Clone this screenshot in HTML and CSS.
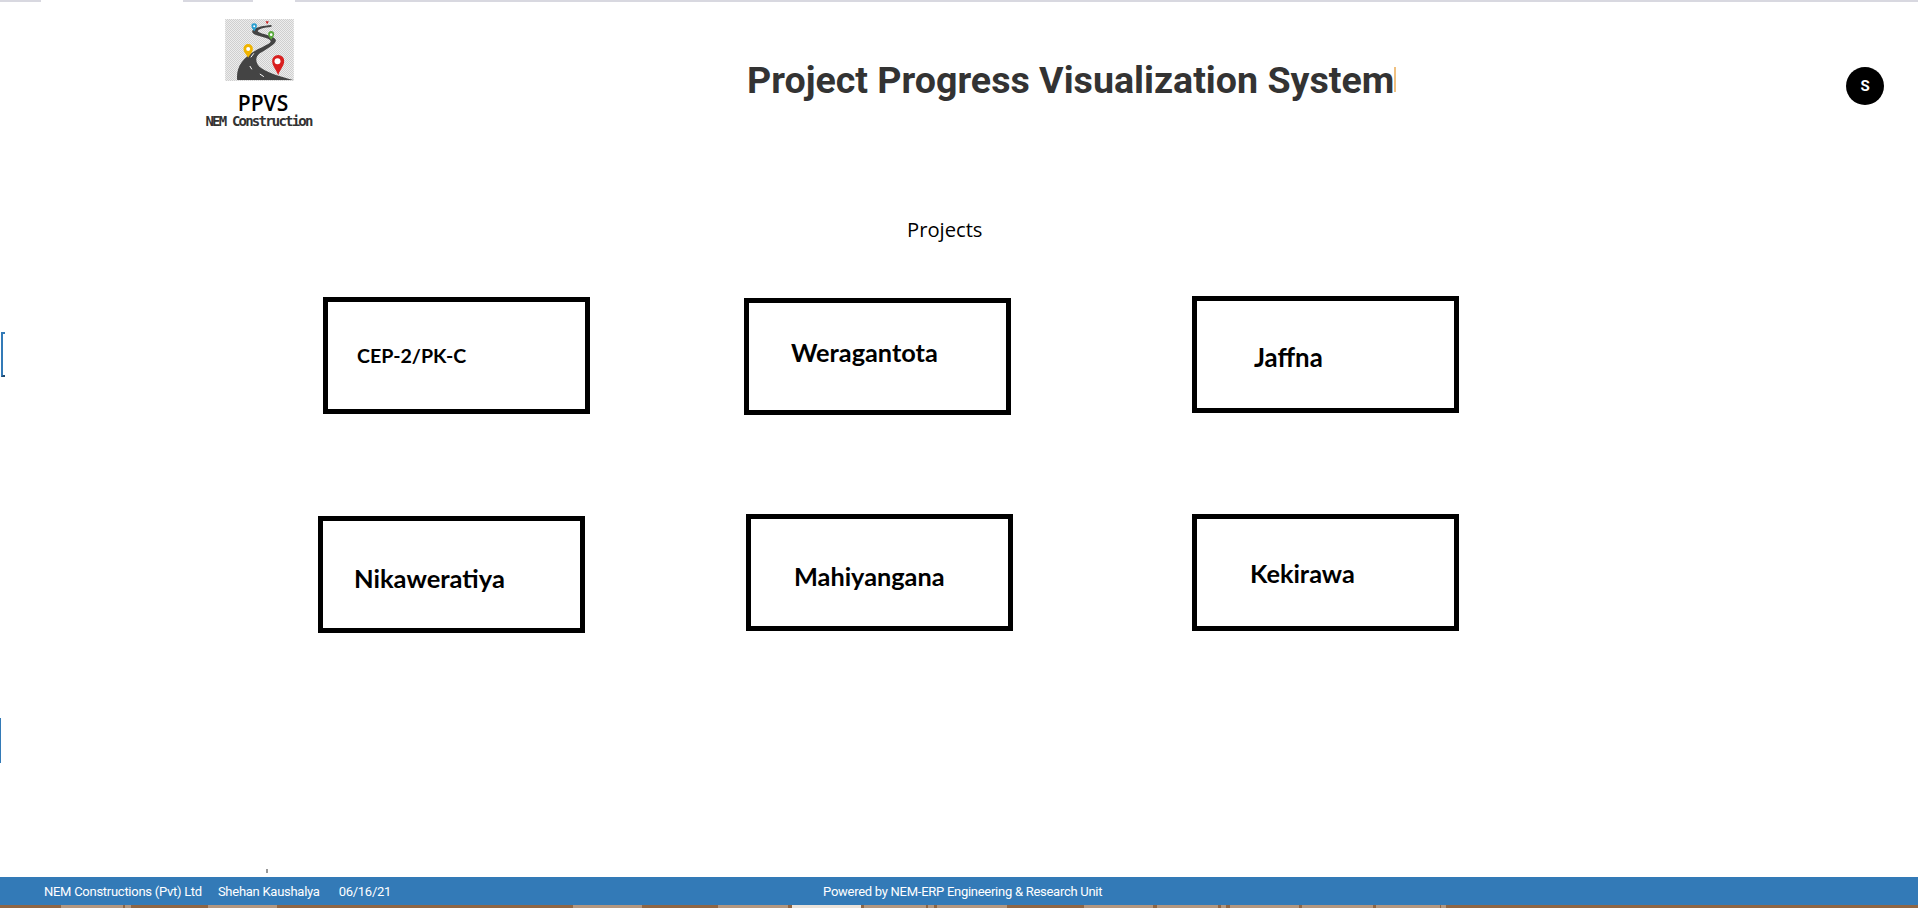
FILE: index.html
```html
<!DOCTYPE html>
<html lang="en">
<head>
<meta charset="utf-8">
<title>Project Progress Visualization System</title>
<link rel="stylesheet" href="styles.css">
</head>
<body>
<div class="top-strip">
  <span class="seg seg-a"></span><span class="seg seg-b"></span>
</div>
<header class="header">
  <div class="brand">
    <svg class="logo" viewBox="136 57 212 186" aria-hidden="true">
      <defs>
        <pattern id="dots" width="6" height="6" patternUnits="userSpaceOnUse">
          <rect width="6" height="6" fill="#f4f4f4"/>
          <rect width="3" height="3" fill="#c8c8c8"/>
          <rect x="3" y="3" width="3" height="3" fill="#c8c8c8"/>
        </pattern>
      </defs>
      <rect x="136" y="57" width="206" height="186" fill="url(#dots)"/>
      <path d="M172 240C168 200 190 170 240 145C262 134 275 128 272 122C268 112 225 108 218 98C212 88 235 78 275 75L275 80C250 83 232 88 234 94C240 102 285 108 288 120C290 132 262 145 240 160C225 172 225 190 245 205C270 222 310 232 340 240Z" fill="#444"/>
      <path d="M213 172L222 160M210 198L216 208M240 222L252 230" stroke="#fff" stroke-width="3" fill="none"/>
      <path d="M205 132a14 14 0 0 1 14 15c0 10-10 18-14 26c-4-8-14-16-14-26a14 14 0 0 1 14-15z" fill="#f0b400"/>
      <circle cx="205" cy="147" r="6" fill="#fff"/>
      <path d="M295 165a18 18 0 0 1 18 19c0 14-13 26-18 42c-5-16-18-28-18-42a18 18 0 0 1 18-19z" fill="#d81e1e"/>
      <circle cx="293" cy="184" r="9" fill="#fff"/>
      <path d="M274 93a9 9 0 0 1 9 10c0 7-6 11-9 17c-3-6-9-10-9-17a9 9 0 0 1 9-10z" fill="#58a83a"/>
      <circle cx="274" cy="104" r="4" fill="#fff"/>
      <path d="M223 70a8 8 0 0 1 8 9c0 6-5 10-8 15c-3-5-8-9-8-15a8 8 0 0 1 8-9z" fill="#2a9fd0"/>
      <circle cx="223" cy="79" r="3" fill="#fff"/>
      <path d="M257 64h10l-5 9z" fill="#c82020"/>
    </svg>
    <div class="brand-name">PPVS</div>
    <div class="brand-sub">NEM Construction</div>
  </div>
  <h1 class="title">Project Progress Visualization System</h1>
  <span class="title-mark"></span>
  <div class="avatar">S</div>
</header>
<main class="main">
  <div class="heading">Projects</div>
  <div class="row row-one">
    <a class="card cep">CEP-2/PK-C</a>
    <a class="card wer">Weragantota</a>
    <a class="card jaf">Jaffna</a>
  </div>
  <div class="row row-two">
    <a class="card nik">Nikaweratiya</a>
    <a class="card mah">Mahiyangana</a>
    <a class="card kek">Kekirawa</a>
  </div>
  <span class="bracket"></span>
  <span class="edge-line"></span>
  <span class="tick"></span>
</main>
<footer class="footer">
  <span class="foot-a">NEM Constructions (Pvt) Ltd</span>
  <span class="foot-b">Shehan Kaushalya</span>
  <span class="foot-c">06/16/21</span>
  <span class="foot-d">Powered by NEM-ERP Engineering &amp; Research Unit</span>
</footer>
<svg class="desk" viewBox="0 0 1918 3" preserveAspectRatio="none" aria-hidden="true">
  <rect width="1918" height="3" fill="#8f6644"/>
  <g fill="#b3977f">
    <rect x="61" width="62" height="3"/><rect x="125" width="6" height="3"/>
    <rect x="208" width="69" height="3"/><rect x="573" width="69" height="3"/>
    <rect x="718" width="70" height="3"/><rect x="864" width="62" height="3"/>
    <rect x="928" width="6" height="3"/><rect x="937" width="70" height="3"/>
    <rect x="1084" width="69" height="3"/><rect x="1157" width="61" height="3"/>
    <rect x="1221" width="5" height="3"/><rect x="1230" width="69" height="3"/>
    <rect x="1302" width="71" height="3"/><rect x="1376" width="64" height="3"/>
    <rect x="1441" width="5" height="3"/>
  </g>
  <rect x="792" width="69" height="3" fill="#e9e2da"/>
</svg>
</body>
</html>
```
FILE: styles.css
```css
* { box-sizing: border-box; }
html, body { margin: 0; height: 908px; overflow: hidden; background: #fff; }
body { display: flex; flex-direction: column; font-family: "Open Sans", sans-serif; color: #000; }

.top-strip { position: relative; flex: 0 0 2px; background: #d8d8e0; }
.seg { position: absolute; top: 0; height: 2px; background: #fff; }
.seg-a { left: 41px; width: 142px; }
.seg-b { left: 253px; width: 42px; }

.header { flex: 0 0 156px; display: flex; align-items: flex-start; position: relative; }
.brand { width: 126px; margin-left: 200px; padding-top: 17px; display: flex; flex-direction: column; align-items: center; }
.logo { display: block; width: 71px; height: 62px; margin-right: 5px; }
.brand-name { margin-top: 12px; font: 600 21px/21px "Open Sans", sans-serif; color: #000; }
.brand-sub { margin-right: 9px; font: 700 14px/14px "DejaVu Sans Mono", monospace; letter-spacing: -1.8px; color: #333; white-space: nowrap; }
.title { margin: 55px 0 0 421px; font: 700 37.6px/46px Roboto, sans-serif; color: #333; white-space: nowrap; }
.title-mark { width: 2px; height: 25px; margin-top: 65px; background: #f0c080; }
.avatar { position: absolute; left: 1846px; top: 65px; width: 38px; height: 38px; border-radius: 50%; background: #000; color: #fff; font: 700 15px/38px Roboto, sans-serif; text-align: center; }

.main { position: relative; flex: 1; min-height: 719px; }
.heading { width: 100%; padding-left: 907px; padding-top: 57px; font: 400 20.2px/28px "Open Sans", sans-serif; }
.row { display: flex; align-items: flex-start; font-family: Lato, sans-serif; }
.row-one { margin-top: 54px; height: 117px; }
.row-two { margin-top: 100px; }
.card { display: flex; align-items: center; width: 267px; height: 117px; border: 5px solid #000; font-weight: 700; font-size: 25.3px; color: #000; white-space: nowrap; }

.cep { margin-left: 323px; padding: 0 0 0 29px; font-size: 19.6px; }
.wer { margin: 1px 0 0 154px; padding: 0 0 10px 42px; }
.jaf { margin: -1px 0 0 181px; padding: 4px 0 0 57px; font-size: 25.8px; }
.nik { margin: 2px 0 0 318px; padding: 6px 0 0 31px; font-size: 25.5px; }
.mah { margin: 0 0 0 161px; padding: 6px 0 0 43px; }
.kek { margin: 0 0 0 179px; padding: 1px 0 0 53px; }

.bracket { position: absolute; left: 1px; top: 174px; width: 4px; height: 45px; border-left: 2px solid #337ab7; border-top: 2px solid #337ab7; border-bottom: 2px solid #1f4a70; }
.edge-line { position: absolute; left: 0; top: 560px; width: 1px; height: 45px; background: #337ab7; }
.tick { position: absolute; left: 266px; top: 711px; width: 2px; height: 4px; background: #999; }

.footer { flex: 0 0 28px; display: flex; align-items: center; padding-top: 1px; background: #337ab7; color: #fff; font: 400 13px/27px Roboto, sans-serif; letter-spacing: -0.27px; white-space: nowrap; }
.foot-a { margin-left: 44px; }
.foot-b { margin-left: 16px; }
.foot-c { margin-left: 19px; }
.foot-d { margin-left: 432px; }

.desk { display: block; flex: 0 0 3px; width: 100%; height: 3px; }
```
